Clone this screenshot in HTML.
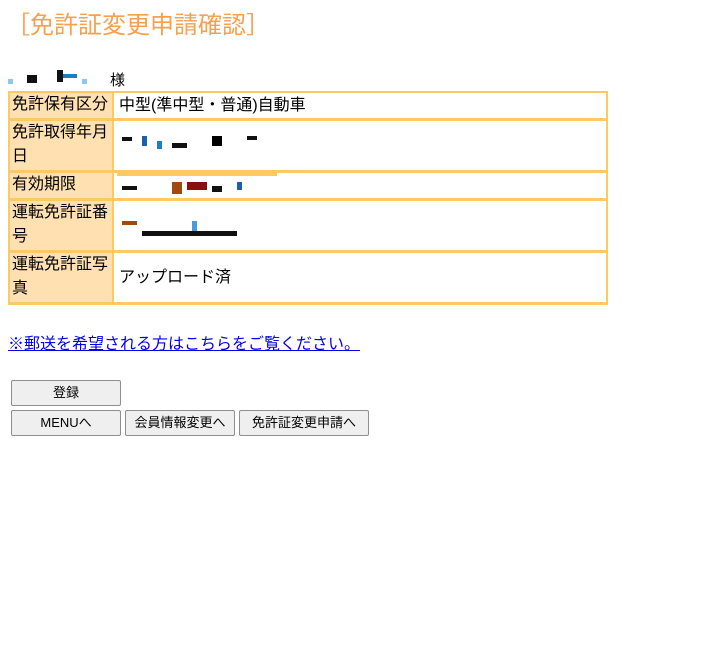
<!DOCTYPE html>
<html><head><meta charset="utf-8"><style>
body{margin:0;width:711px;height:654px;background:#fff;font-family:"Liberation Sans","Noto Sans CJK JP",sans-serif;position:relative;overflow:hidden}
.a{position:absolute}
.t{font-size:24px;color:#f7a04e;left:6px;top:5px}
.box{position:absolute;background:#fdc965}
.lab{position:absolute;background:#ffe0b0;font-size:16px;line-height:24px;color:#000;padding-left:2px;box-sizing:border-box}
.val{position:absolute;background:#fff;font-size:16px;color:#000}
.p{position:absolute}
.btn{position:absolute;background:#efefef;border:1px solid #8f8f8f;border-radius:2px;font-size:13px;text-align:center;line-height:24px;box-sizing:border-box;height:26px}
</style></head><body>
<div class="a t">［免許証変更申請確認］</div>
<div class="a" style="left:110px;top:69px;font-size:15px">様</div>
<div class="p" style="left:8px;top:79px;width:5px;height:5px;background:#8cc8f0"></div>
<div class="p" style="left:27px;top:75px;width:10px;height:8px;background:#111"></div>
<div class="p" style="left:57px;top:70px;width:6px;height:12px;background:#111"></div>
<div class="p" style="left:63px;top:74px;width:14px;height:4px;background:#1a7fc8"></div>
<div class="p" style="left:82px;top:79px;width:5px;height:5px;background:#8cc8f0"></div>

<div class="box" style="left:8px;top:91px;width:600px;height:214px"></div>
<div class="lab" style="left:10px;top:93px;width:102px;height:25px">免許保有区分</div>
<div class="val" style="left:114px;top:93px;width:492px;height:25px;line-height:25px;padding-left:5px;box-sizing:border-box">中型(準中型・普通)自動車</div>
<div class="lab" style="left:10px;top:121px;width:102px;height:49px">免許取得年月日</div>
<div class="val" style="left:114px;top:121px;width:492px;height:49px"></div>
<div class="lab" style="left:10px;top:173px;width:102px;height:25px">有効期限</div>
<div class="val" style="left:114px;top:173px;width:492px;height:25px"></div>
<div class="lab" style="left:10px;top:201px;width:102px;height:49px">運転免許証番号</div>
<div class="val" style="left:114px;top:201px;width:492px;height:49px"></div>
<div class="lab" style="left:10px;top:253px;width:102px;height:49px">運転免許証写真</div>
<div class="val" style="left:114px;top:253px;width:492px;height:49px;line-height:49px;padding-left:5px;box-sizing:border-box">アップロード済</div>

<div class="p" style="left:122px;top:137px;width:10px;height:4px;background:#111"></div>
<div class="p" style="left:142px;top:136px;width:5px;height:10px;background:#1a5fb0"></div>
<div class="p" style="left:157px;top:141px;width:5px;height:8px;background:#1a7fc8"></div>
<div class="p" style="left:172px;top:143px;width:15px;height:5px;background:#111"></div>
<div class="p" style="left:212px;top:136px;width:10px;height:10px;background:#000"></div>
<div class="p" style="left:247px;top:136px;width:10px;height:4px;background:#111"></div>
<div class="p" style="left:117px;top:173px;width:160px;height:3px;background:#fdc965"></div>
<div class="p" style="left:122px;top:186px;width:15px;height:4px;background:#111"></div>
<div class="p" style="left:172px;top:182px;width:10px;height:12px;background:#a04a10"></div>
<div class="p" style="left:187px;top:182px;width:20px;height:8px;background:#8a1010"></div>
<div class="p" style="left:212px;top:186px;width:10px;height:6px;background:#111"></div>
<div class="p" style="left:237px;top:182px;width:5px;height:8px;background:#1a5fb0"></div>
<div class="p" style="left:122px;top:221px;width:15px;height:4px;background:#a04a10"></div>
<div class="p" style="left:142px;top:231px;width:95px;height:5px;background:#111"></div>
<div class="p" style="left:192px;top:221px;width:5px;height:10px;background:#4a9ae0"></div>

<a class="a" style="left:8px;top:330px;font-size:16px;color:#00e;text-decoration:underline">※郵送を希望される方はこちらをご覧ください。</a>
<div class="btn" style="left:11px;top:380px;width:110px">登録</div>
<div class="btn" style="left:11px;top:410px;width:110px">MENUへ</div>
<div class="btn" style="left:125px;top:410px;width:110px">会員情報変更へ</div>
<div class="btn" style="left:239px;top:410px;width:130px">免許証変更申請へ</div>
</body></html>
